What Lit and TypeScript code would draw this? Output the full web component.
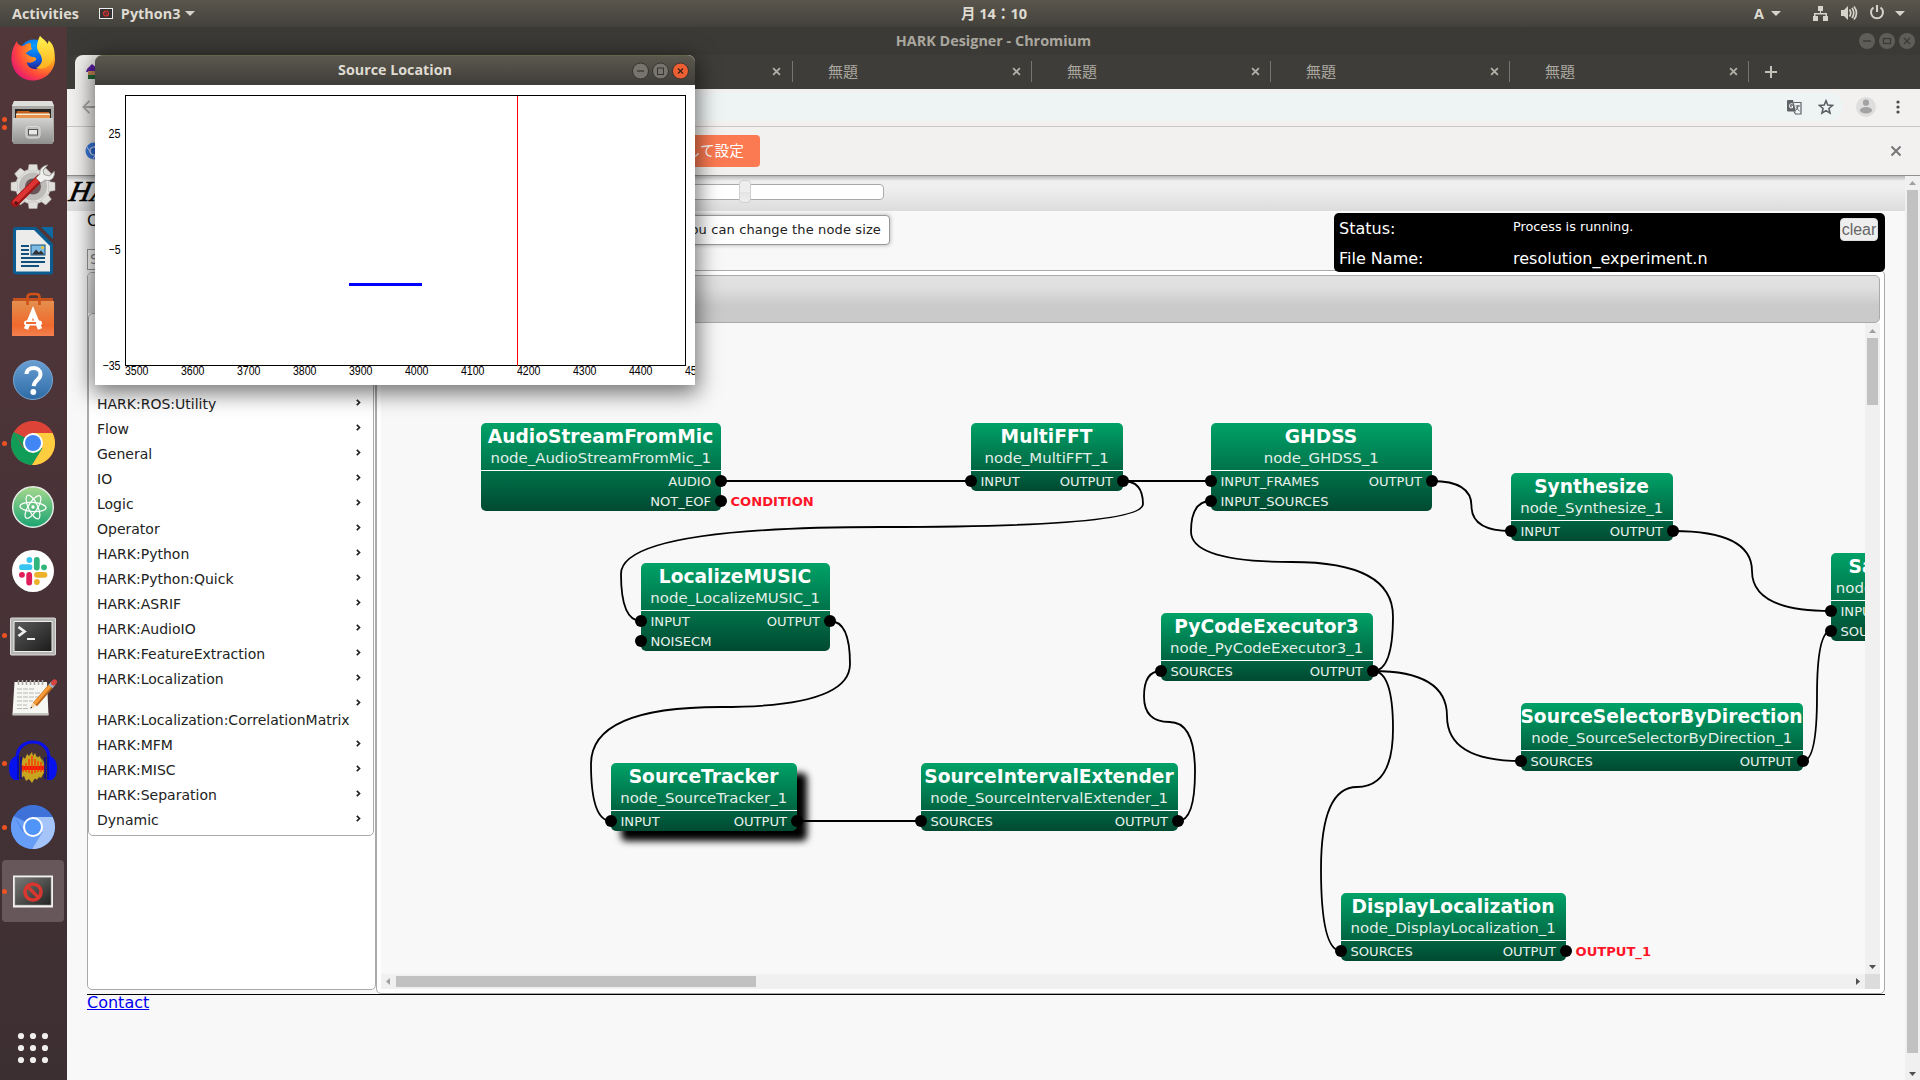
import { LitElement, html, svg, css, nothing } from "lit";
import { customElement } from "lit/decorators.js";

const TOP = "HARK";

const firefox = svg`
  <defs>
    <radialGradient id="ffA" cx=".85" cy=".2" r="1"><stop offset="0" stop-color="#ffe226"/><stop offset=".4" stop-color="#ff9a1f"/><stop offset=".7" stop-color="#ff4a3a"/><stop offset="1" stop-color="#e2127c"/></radialGradient>
    <radialGradient id="ffB" cx=".5" cy=".2" r=".8"><stop offset="0" stop-color="#0aa0ff"/><stop offset=".6" stop-color="#0a5be0"/><stop offset="1" stop-color="#2a1a80"/></radialGradient>
    <linearGradient id="ffC" x1="0" y1="0" x2="0" y2="1"><stop offset="0" stop-color="#fff44f"/><stop offset="1" stop-color="#ffb01f"/></linearGradient>
  </defs>
  <circle cx="25" cy="20" r="15.5" fill="url(#ffB)"/>
  <path d="M8 6 C4 12 2 18 2.500 26 C4 38 13 45.500 24 45.500 C36 45.500 46 36 46 24 C46 18 43 12 39 8 C42 20 36 27 34 27 C36 30 30 35 25 34 C19 33 18 29 18 27 C22 29 24 27 27 25 C28 23 26 22 24 22 C20 22 20 19 17 19 C17 17 20 16 23 14 C21 11 23 9 21 8 C17 8 16 11 13 11 C9 10 8 8 8 6Z" fill="url(#ffA)"/>
  <path d="M31 .8 C29 5 28 8 28 12 C28 17 33 19 33 25 C33 28 30 32 27 33 C34 36 44 31 45.500 20 C46 13 43 8 39.500 5.500 C39.500 7 39 8 38.500 9 C37 5 33 4 31 .8Z" fill="url(#ffC)"/>`;

const files = svg`
  <defs><linearGradient id="fiA" x1="0" y1="0" x2="0" y2="1"><stop offset="0" stop-color="#d2d2d0"/><stop offset="1" stop-color="#8f8f8d"/></linearGradient></defs>
  <path d="M5 2h38l2 5v36H3V7z" fill="#a9a9a7"/><path d="M5 2h38l2 5H3z" fill="#dededc"/>
  <rect x="6" y="10" width="36" height="11" fill="#2a2623"/>
  <path d="M8 12h12l1 1h19v8H7z" fill="#c4601c"/><rect x="7" y="14.500" width="34" height="1.500" fill="#f4ead8"/><rect x="7" y="16" width="34" height="4" fill="#e8924a"/>
  <rect x="4" y="19" width="40" height="26" rx="1" fill="url(#fiA)"/>
  <rect x="17" y="27.500" width="14" height="11.500" rx="2.500" fill="#bdbdbb" stroke="#dcdcda"/><rect x="19.500" y="30.500" width="9" height="5.500" fill="#e8e8e8" stroke="#555"/>`;

const settings = svg`
  <g transform="translate(0 -1)">
  <g fill="#e0dfdc" stroke="#b5b3b1" stroke-width=".5">
    <circle cx="24" cy="24.500" r="17.500"/>
    ${[0, 45, 90, 135, 180, 225, 270, 315].map((a) => svg`<path d="M19 9l1-6.500h8l1 6.500z" transform=${`rotate(${a} 24 24.500)`}></path>`)}
  </g>
  <circle cx="24" cy="24.500" r="14" fill="#bebcba"/><circle cx="24" cy="24.500" r="8" fill="#6a5657"/>
  <path d="M30 17 L6 41" stroke="#9c1717" stroke-width="8" stroke-linecap="round"/>
  <path d="M29 17 L6 40" stroke="#d33" stroke-width="4.600" stroke-linecap="round"/>
  <circle cx="7" cy="41" r="1.800" fill="#5a0f10"/>
  <path d="M27 16l5 5 4-3c6 2 10-2 9.500-9l-5 5-5.500-1.500-1-4.500 5-5c-6 .5-9 5-8 9z" fill="#f0f0ee" stroke="#8d8d8b" stroke-width=".8"/></g>`;

const writer = svg`
  <path d="M7 0h20l17 17v28q0 2.500-2.500 2.500H7q-3 0-3-3V3q0-3 3-3z" fill="#0b5c91"/>
  <path d="M8 3h17l16 16v25.500H7V4q0-1 1-1z" fill="#ececea"/><path d="M25 3l16 16H41z" fill="#cfe0ea"/>
  <path d="M32 0h12v12z" fill="#0f69a3"/>
  <g fill="#12527e"><path d="M12 18h8v2h-8zM12 22h8v2h-8zM12 26h8v2h-8zM12 30h24v2H12zM12 34h24v2H12zM12 38h18v2H12z"/></g>
  <rect x="22" y="18" width="14" height="10" fill="#7cbce4" stroke="#12527e"/><path d="M23 27.500l4-5 3 3 2-2 3.500 4z" fill="#333"/><circle cx="33.500" cy="20.500" r="1.600" fill="#e8c53a"/>`;

const software = svg`
  <defs><linearGradient id="soA" x1="0" y1="0" x2="0" y2="1"><stop offset="0" stop-color="#e48f4e"/><stop offset=".7" stop-color="#f0692c"/><stop offset="1" stop-color="#f38150"/></linearGradient></defs>
  <path d="M4 7h40v5H4z" fill="#c4521f"/><path d="M3 10h42v35H3z" fill="url(#soA)"/>
  <path d="M18.500 14V6q0-3 4-3h4q4 0 4 3v8" fill="none" stroke="#cf5117" stroke-width="2.600"/>
  <path d="M17 38L24 21l7 17" fill="none" stroke="#fff" stroke-width="4.500"/><rect x="15" y="29.500" width="18" height="5" rx="2.500" fill="#fff"/><path d="M17 32h10" stroke="#e95b1c" stroke-width="1.800"/>`;

const help = svg`
  <defs><linearGradient id="heA" x1="0" y1="0" x2="0" y2="1"><stop offset="0" stop-color="#6a9fd3"/><stop offset="1" stop-color="#2d6ba6"/></linearGradient></defs>
  <circle cx="24" cy="25" r="19.500" fill="url(#heA)" stroke="#78a5cf"/>
  <path d="M17.500 19c0-8 14-8 14 .2 0 5.600-6.500 6-6.800 12" fill="none" stroke="#fff" stroke-width="4"/><circle cx="24.300" cy="37" r="2.900" fill="#fff"/>`;

const chrome = (a: string, b: string, c: string, d: string) => svg`
  <circle cx="24" cy="24" r="22" fill="${a}"/>
  <path d="M24 24 L4.900 13 A22 22 0 0 0 23 46 L33.500 29.500z" fill="${b}"/>
  <path d="M24 14h19.600A22 22 0 0 1 23 46l10.500-17z" fill="${c}"/>
  <path d="M5 13a22 22 0 0 1 38.700 1H24l-10 15z" fill="${a}"/><path d="M4.900 13L15 29l6-8z" fill="${b}"/>
  <circle cx="24" cy="24" r="10" fill="#fff"/><circle cx="24" cy="24" r="8" fill="${d}"/>`;

const atom = svg`
  <defs><linearGradient id="atA" x1="0" y1="0" x2="0" y2="1"><stop offset="0" stop-color="#a5d88f"/><stop offset="1" stop-color="#1aa471"/></linearGradient></defs>
  <circle cx="24" cy="24" r="20.300" fill="url(#atA)" stroke="#e9ede9" stroke-width="1.400"/>
  <g fill="none" stroke="#fff" stroke-width="1.200"><ellipse cx="24" cy="24" rx="13" ry="4.600" transform="rotate(4 24 24)"/><ellipse cx="24" cy="24" rx="13" ry="4.600" transform="rotate(65 24 24)"/><ellipse cx="24" cy="24" rx="13" ry="4.600" transform="rotate(122 24 24)"/></g>
  <circle cx="24" cy="24" r="1.700" fill="#fff"/>`;

const slack = svg`
  <circle cx="24" cy="24" r="21" fill="#fff"/>
  <g stroke-width="5.800" stroke-linecap="round" fill="none">
    <path d="M13 20.200h7.500M20.400 13v-.1" stroke="#36c5f0"/><path d="M27.800 13v7.500M35 20.300h.1" stroke="#2eb67d"/>
    <path d="M28 27.800h7.500M27.900 35v.1" stroke="#ecb22e"/><path d="M20.200 28v7.500M13 27.800h-.1" stroke="#e01e5a"/>
  </g>`;

const terminal = svg`
  <defs><linearGradient id="teA" x1="0" y1="0" x2="1" y2="1"><stop offset="0" stop-color="#5a5a5a"/><stop offset="1" stop-color="#1c1c1c"/></linearGradient></defs>
  <rect x="1.500" y="7" width="45" height="37" rx="1" fill="#b5b5b3" stroke="#dcdcda"/><rect x="4.500" y="10" width="39" height="31" fill="#eee"/>
  <rect x="5.500" y="11" width="37" height="29" fill="url(#teA)"/>
  <path d="M9.500 16l6 4.500-6 4.500" fill="none" stroke="#eee" stroke-width="2.800"/><path d="M18 28h8" stroke="#eee" stroke-width="2"/>`;

const notepad = svg`
  <path d="M5.500 7h32.500l1.500 32.500H3.500z" fill="#f6f6f3"/><path d="M3.500 38h36v2.500h-36z" fill="#c5c5c0"/>
  <g stroke="#a5a5a0" fill="none" stroke-width="1.500"><path d="M9.500 5v5M13.500 5v5M17.500 5v5M21.500 5v5M25.500 5v5M29.500 5v5M33.500 5v5"/></g>
  <path d="M8 14h18M8 18h24M8 22h22M8 26h16M8 30h10M8 33.500h12" stroke="#b0b0ab" stroke-width=".9" stroke-dasharray="5 1"/>
  <path d="M26 29.500L42 11" stroke="#b5651a" stroke-width="5.400"/><path d="M25.400 29L41.500 10.500" stroke="#f79a36" stroke-width="3.400"/>
  <path d="M23 28l-1.500 5.500 5.500-2.500z" fill="#f2d4a5"/><path d="M21.400 33.600l.6-2 1.400 1.200z" fill="#222"/>
  <path d="M41.500 11.500l3-3.500" stroke="#9fb2c4" stroke-width="5.400"/><path d="M44.500 8l1-1.200" stroke="#d8443f" stroke-width="5" stroke-linecap="round"/>`;

const audacity = svg`
  <path d="M8 24V18C9 -2 39 -2 40 18v6" fill="none" stroke="#0b10e8" stroke-width="3.200"/>
  <ellipse cx="24" cy="28.500" rx="12.500" ry="11.500" fill="#a39021"/><path d="M12 27l2-9 2 2 2-5 2 2 3-4 1 4 2-3 2 5 3-2 2 7 2 3v6l-3 6-2-2-2 4-2-2-3 5-3-4-3 2-2-5-3 2z" fill="#c9a41f"/>
  <path d="M12 29h24" stroke="#f10f05" stroke-width="4"/><path d="M14 26v7M17 24v9M20 20v14M23 17v18M26 20v14M29 22v11M32 23v10M35 26v7" stroke="#f53a08" stroke-width="1.400"/>
  <path d="M10 16q-10 2-10 13 0 10 6 12h4zM38 16q10 2 10 13 0 10-6 12h-4z" fill="#0712ee"/><path d="M9 17v23M12 18v22M39 17v23M36 18v22" stroke="#06099b" stroke-width="1.400"/>`;

const denied = svg`
  <defs><linearGradient id="deA" x1="0" y1="0" x2="1" y2="1"><stop offset="0" stop-color="#7a7a78"/><stop offset="1" stop-color="#232323"/></linearGradient></defs>
  <rect x="4" y="8.500" width="40" height="32" fill="#f1f1ef"/><rect x="6" y="10.500" width="36" height="27.500" fill="url(#deA)" stroke="#888" stroke-width=".6"/>
  <circle cx="24" cy="25" r="8" fill="none" stroke="#d8372f" stroke-width="3.600"/><path d="M18.500 19.500l11 11" stroke="#d8372f" stroke-width="3.400"/>`;

interface DockItem { icon: unknown; dots?: number; active?: boolean }
const DOCK: DockItem[] = [
  { icon: firefox }, { icon: files, dots: 2 }, { icon: settings }, { icon: writer }, { icon: software },
  { icon: help }, { icon: chrome("#dd4437", "#0f9d58", "#ffcd40", "#4285f4"), dots: 1 }, { icon: atom }, { icon: slack },
  { icon: terminal, dots: 1 }, { icon: notepad }, { icon: audacity, dots: 1 },
  { icon: chrome("#3f72d8", "#669df6", "#a4c4fa", "#5094f8"), dots: 1 }, { icon: denied, dots: 1, active: true },
];

const MENU = [
  `${TOP}:ROS:Utility`, "Flow", "General", "IO", "Logic", "Operator", `${TOP}:Python`, `${TOP}:Python:Quick`,
  `${TOP}:ASRIF`, `${TOP}:AudioIO`, `${TOP}:FeatureExtraction`, `${TOP}:Localization`,
  `${TOP}:Localization:CorrelationMatrix`, `${TOP}:MFM`, `${TOP}:MISC`, `${TOP}:Separation`, "Dynamic",
];

interface GraphNode {
  name: string; x: number; y: number; w: number; inputs: string[]; outputs: string[];
  selected?: boolean; tag?: string; tagRow?: number; titleShift?: number;
}
const NODES: GraphNode[] = [
  { name: "AudioStreamFromMic", x: 481, y: 423, w: 240, inputs: [], outputs: ["AUDIO", "NOT_EOF"], tag: "CONDITION", tagRow: 1 },
  { name: "MultiFFT", x: 971, y: 423, w: 152, inputs: ["INPUT"], outputs: ["OUTPUT"] },
  { name: "GHDSS", x: 1211, y: 423, w: 221, inputs: ["INPUT_FRAMES", "INPUT_SOURCES"], outputs: ["OUTPUT"] },
  { name: "Synthesize", x: 1511, y: 473, w: 162, inputs: ["INPUT"], outputs: ["OUTPUT"] },
  { name: "LocalizeMUSIC", x: 641, y: 563, w: 189, inputs: ["INPUT", "NOISECM"], outputs: ["OUTPUT"] },
  { name: "PyCodeExecutor3", x: 1161, y: 613, w: 212, inputs: ["SOURCES"], outputs: ["OUTPUT"] },
  { name: "SourceSelectorByDirection", x: 1521, y: 703, w: 282, inputs: ["SOURCES"], outputs: ["OUTPUT"] },
  { name: "SourceTracker", x: 611, y: 763, w: 186, inputs: ["INPUT"], outputs: ["OUTPUT"], selected: true },
  { name: "SourceIntervalExtender", x: 921, y: 763, w: 257, inputs: ["SOURCES"], outputs: ["OUTPUT"] },
  { name: "DisplayLocalization", x: 1341, y: 893, w: 225, inputs: ["SOURCES"], outputs: ["OUTPUT"], tag: "OUTPUT_1", tagRow: 0 },
  { name: "SaveWavePCM", x: 1831, y: 553, w: 182, inputs: ["INPUT", "SOURCES"], outputs: ["OUTPUT"], titleShift: 4 },
];

/** Forward link: eases out to the middle column and back in. */
const forward = (x1: number, y1: number, x2: number, y2: number) => {
  const mx = (x1 + x2) / 2, my = (y1 + y2) / 2;
  return `M${x1} ${y1}Q${mx} ${y1} ${mx} ${my}Q${mx} ${y2} ${x2} ${y2}`;
};
/** Backward link: loops round both ports through the row between the nodes. */
const back = (x1: number, y1: number, x2: number, y2: number, row: number, out = 20) => {
  const r = x1 + out, l = x2 - out;
  return `M${x1} ${y1}Q${r} ${y1} ${r} ${(y1 + row) / 2}Q${r} ${row} ${(l + r) / 2} ${row}Q${l} ${row} ${l} ${(row + y2) / 2}Q${l} ${y2} ${x2} ${y2}`;
};
const LINKS = [
  "M721 481H971", "M1123 481H1211", "M797 821H921",
  back(1123, 481, 641, 621, 527), back(830, 621, 611, 821, 707), back(1178, 821, 1161, 671, 722, 17),
  back(1373, 671, 1211, 501, 562), back(1373, 671, 1341, 951, 787),
  forward(1432, 481, 1511, 531), forward(1673, 531, 1831, 611), forward(1373, 671, 1521, 761), forward(1803, 761, 1831, 631),
];

@customElement("node-canvas")
class NodeCanvas extends LitElement {
  static styles = css`
    :host { display: block; flex: 1; min-width: 0; overflow: hidden; background: #f8f8f8; }
    svg { display: block; font-family: "DejaVu Sans", sans-serif; }
    .title { font-size: 18.67px; font-weight: bold; fill: #fff; text-anchor: middle; }
    .sub { font-size: 14.95px; fill: #e3efe9; text-anchor: middle; }
    .port { font-size: 13.1px; fill: #e9f1ed; }
    .end { text-anchor: end; }
    .tag { font-size: 13.1px; font-weight: bold; fill: #ff1428; }
    .link { fill: none; stroke: #000; stroke-width: 1.8; }
  `;
  private node(n: GraphNode) {
    const h = 48 + 20 * Math.max(n.inputs.length, n.outputs.length);
    const r = n.x + n.w, c = n.x + n.w / 2;
    return svg`
      ${n.selected ? svg`<rect x=${n.x + 10} y=${n.y + 10} width=${n.w} height=${h} rx="5" filter="url(#glow)"></rect>` : nothing}
      <rect x=${n.x} y=${n.y} width=${n.w} height=${h} rx="5" fill="url(#box)"></rect>
      <rect x=${n.x} y=${n.y + 47} width=${n.w} height="1" fill="#fff"></rect>
      <text class="title" x=${c - 0.5 + (n.titleShift ?? 0)} y=${n.y + 19.5}>${n.name}</text>
      <text class="sub" x=${c - 0.3} y=${n.y + 40}>node_${n.name}_1</text>
      ${n.inputs.map((p, i) => svg`<circle cx=${n.x} cy=${n.y + 58 + i * 20} r="6"></circle><text class="port" x=${n.x + 9.5} y=${n.y + 63 + i * 20}>${p}</text>`)}
      ${n.outputs.map((p, i) => svg`<circle cx=${r} cy=${n.y + 58 + i * 20} r="6"></circle><text class="port end" x=${r - 10} y=${n.y + 63 + i * 20}>${p}</text>`)}
      ${n.tag ? svg`<text class="tag" x=${r + 9.5} y=${n.y + 63 + (n.tagRow ?? 0) * 20}>${n.tag}</text>` : nothing}`;
  }
  render() {
    return html`<svg width="1484" height="651" viewBox="381 323 1484 651">
      <defs>
        <linearGradient id="box" x1="0" y1="0" x2="0" y2="1"><stop offset="0" stop-color="#00a268"/><stop offset="1" stop-color="#004a31"/></linearGradient>
        <filter id="glow" x="-20%" y="-40%" width="140%" height="180%"><feGaussianBlur stdDeviation="3.500"/></filter>
      </defs>
      ${NODES.map((n) => this.node(n))}
      ${LINKS.map((d) => svg`<path class="link" d=${d}></path>`)}
    </svg>`;
  }
}

@customElement("source-window")
class SourceWindow extends LitElement {
  static styles = css`
    :host { display: flex; flex-direction: column; width: 600px; height: 330px; border-radius: 7px 7px 0 0; box-shadow: 0 5px 22px 3px rgba(0,0,0,.55); background: #fff; }
    .bar { height: 30px; box-sizing: border-box; display: grid; grid-template-columns: 1fr auto 1fr; align-items: center; padding: 0 6px 0 6px; border-radius: 7px 7px 0 0; background: linear-gradient(#5b584e, #3e3d38); border-top: 1px solid #66634f; }
    .title { font: 700 14.3px/28px "Open Sans", sans-serif; color: #dfdbd2; margin-top: -2px; }
    .buttons { display: flex; gap: 3px; justify-content: flex-end; }
    .plot { display: block; font: 12.5px "Liberation Sans", sans-serif; }
  `;
  render() {
    return html`
      <div class="bar"><span></span><span class="title">Source Location</span>
        <span class="buttons">
          <svg width="17" height="18"><circle cx="8.500" cy="9" r="8" fill="#76746c" stroke="#35342f"/><path d="M5 9h7" stroke="#35342f" stroke-width="1.200"/></svg>
          <svg width="17" height="18"><circle cx="8.500" cy="9" r="8" fill="#76746c" stroke="#35342f"/><rect x="5.500" y="6" width="6" height="6.500" fill="none" stroke="#35342f"/></svg>
          <svg width="17" height="18"><circle cx="8.500" cy="9" r="8" fill="#ed5f32" stroke="#35342f"/><path d="M6 6.500l5 5m0-5l-5 5" stroke="#35231c" stroke-width="1.200"/></svg>
        </span></div>
      <svg class="plot" width="600" height="300" viewBox="95 85 600 300">
        <rect x="125.500" y="95.500" width="560" height="270" fill="none" stroke="#000"/>
        <path d="M517.500 96v269.500" stroke="#f00" shape-rendering="crispEdges"/>
        <path d="M349 284.500h73" stroke="#00f" stroke-width="3" shape-rendering="crispEdges"/>
        <text x="108.500" y="138" textLength="12" lengthAdjust="spacingAndGlyphs">25</text>
        <text x="108.500" y="254" textLength="12" lengthAdjust="spacingAndGlyphs">−5</text>
        <text x="102.500" y="370" textLength="18" lengthAdjust="spacingAndGlyphs">−35</text>
        ${[3500, 3600, 3700, 3800, 3900, 4000, 4100, 4200, 4300, 4400, 4500].map((v, i) => svg`<text x=${125 + i * 56} y="375" textLength="23.500" lengthAdjust="spacingAndGlyphs">${v}</text>`)}
      </svg>`;
  }
}

@customElement("app-root")
class AppRoot extends LitElement {
  static styles = css`
    * { box-sizing: border-box; }
    :host { display: flex; flex-direction: column; position: relative; width: 1920px; height: 1080px; overflow: hidden; background: #f8f8f8; font-family: "DejaVu Sans", sans-serif; }
    svg { display: block; flex: none; }
    .top { height: 27px; flex: none; display: grid; grid-template-columns: 1fr auto 1fr; align-items: center; background: linear-gradient(#5a564d, #42413b); color: #dfdbd2; font: 700 14.4px/26px "Open Sans", "Noto Sans CJK JP", sans-serif; }
    .top-left { display: flex; align-items: center; padding: 0 0 1px 12px; }
    .app { margin-left: 8px; }
    .thumb { margin-left: 20px; }
    .down { margin-left: 5px; }
    .clock { padding: 0 0 0 68px; width: 136px; white-space: nowrap; font-size: 14.5px; display: flex; justify-content: center; }
    .top-right { display: flex; justify-content: flex-end; align-items: center; padding: 0 14px 1px 0; }
    .body { flex: 1; display: flex; min-height: 0; }
    .dock { width: 67px; flex: none; display: flex; flex-direction: column; background: linear-gradient(#523739, #4a3338 45%, #3c2f32); position: relative; z-index: 6; }
    .slot { height: 64px; flex: none; display: flex; align-items: center; margin: 0 3px 0 2px; border-radius: 4px; }
    .slot.active { background: #67565a; height: 62px; margin-top: 1px; }
    .dots { width: 5px; display: flex; flex-direction: column; gap: 3px; }
    .dot { width: 5px; height: 5px; border-radius: 50%; background: #ee5222; }
    .icon { margin-left: 2px; }
    .apps { margin: auto auto 16px 17px; }
    .browser { flex: 1; min-width: 0; display: flex; flex-direction: column; }
    .titlebar { height: 28px; flex: none; display: grid; grid-template-columns: 1fr auto 1fr; align-items: center; background: #3b3a36; color: #aaa79f; font: 700 14.4px/28px "Open Sans", sans-serif; padding-right: 5px; }
    .heading { padding-left: 5px; }
    .wins { display: flex; gap: 4px; justify-content: flex-end; }
    .tabs { height: 34px; flex: none; display: flex; align-items: center; background: #3e3d39; color: #aaa79f; font: 15px/32px "Noto Sans CJK JP", sans-serif; padding: 0 0 1px 8px; }
    .tab-active { width: 478px; height: 34px; margin-bottom: -1px; background: #f2f1ef; border-radius: 8px 8px 0 0; padding: 9px 0 0 10px; }
    .first-close { width: 228px; margin-right: 11px; display: flex; justify-content: flex-end; }
    .tab { width: 239px; height: 21px; display: flex; align-items: center; justify-content: space-between; border-left: 1px solid #77756f; padding: 0 10px 0 35px; }
    .label { margin-top: -2px; }
    .plus { height: 21px; border-left: 1px solid #77756f; padding: 5px 0 0 16px; }
    .toolbar { height: 38px; flex: none; display: flex; align-items: center; padding: 0 20px 1px 15px; background: #f2f1ef; border-bottom: 1px solid #c9c8c6; }
    .omni { flex: 1; height: 28px; margin: 0 13px 0 60px; border-radius: 14px; background: #eef3f4; display: flex; align-items: center; justify-content: flex-end; gap: 16px; padding-right: 9px; }
    .more { margin-left: 20px; }
    .info { height: 49px; flex: none; display: flex; align-items: center; background: #f2f1ef; border-bottom: 1px solid #8f8f8b; padding: 0 18px; color: #fff; font: 14.7px/30px "Noto Sans CJK JP", sans-serif; }
    .setbtn { width: 140px; margin-left: 517px; margin-right: auto; height: 32px; border-radius: 4px; background: #fc7a52; padding-right: 16px; text-align: right; }
    .viewport { flex: 1; display: flex; min-height: 0; }
    .page { flex: 1; min-width: 0; display: flex; flex-direction: column; }
    .banner { height: 35px; flex: none; background: linear-gradient(#b8b8b8, #eee 5px, #f0f0f0 10px, #dcdcdc); display: flex; align-items: center; justify-content: space-between; }
    .logo { font: italic 400 29px/30px "Liberation Serif", serif; color: #000; width: 60px; height: 32px; margin-bottom: 3px; transform: skewX(-12deg); letter-spacing: 1px; padding-left: 3px; -webkit-text-stroke: .6px #000; }
    .slider { width: 300px; height: 16px; border: 1px solid #aaa; border-radius: 4px; background: #fff; margin: 0 1021px 4px 0; display: flex; align-items: center; }
    .knob { width: 12px; height: 23px; margin-left: 154px; flex: none; border: 1px solid #d0d0d0; border-radius: 4px; background: linear-gradient(#eee 50%, #e4e4e4 52%, #eee); }
    .content { padding: 0 20px 0 20px; display: flex; flex-direction: column; }
    .head { height: 59px; display: flex; justify-content: space-between; }
    .cat { font-size: 16px; line-height: 19px; color: #111; }
    .head-left { display: flex; flex-direction: column; justify-content: space-between; }
    .search { width: 180px; height: 21px; border: 1px solid #999; background: #fff; color: #888; font-size: 14px; line-height: 19px; padding-left: 2px; }
    .status { width: 551px; height: 59px; margin-top: 2px; background: #000; border-radius: 5px; color: #fff; font-size: 16px; display: grid; grid-template-columns: 174px 1fr auto; grid-template-rows: 30px 29px; padding: 0 7px 0 5px; align-items: center; z-index: 1; }
    .run { font-size: 12.8px; padding-bottom: 3px; }
    .file { padding-top: 2px; }
    .clear { height: 23px; width: 38px; border-radius: 4px; border: 1px solid #ddd; background: #eee; color: #666; font: 16px/22px "Liberation Sans", sans-serif; text-align: center; margin-top: 3px; }
    .panels { height: 724px; display: flex; }
    .left { width: 289px; height: 718px; margin-top: 2px; flex: none; border: 1px solid #aaa; border-radius: 5px; background: #fff; display: flex; flex-direction: column; }
    .left-head { height: 40px; flex: none; background: linear-gradient(#ededed, #dcdcdc); border-radius: 4px 4px 0 0; }
    .menu { border: 1px solid #aaa; border-radius: 5px; height: 523px; padding: 77px 8px 0 8px; font-size: 14px; color: #222; margin-right: 1px; }
    .item { height: 25px; display: flex; align-items: center; justify-content: space-between; padding-right: 4px; }
    .item.long { height: 41px; display: grid; grid-template-columns: 1fr; grid-template-rows: 20px 17px; align-content: start; white-space: nowrap; }
    .item.long .arrow { justify-self: end; align-self: end; margin: 0 0 5px; }
    .arrow { margin-bottom: 3px; }
    .right { flex: 1; min-width: 0; border: 1px solid #aaa; border-radius: 5px; background: #fff; padding: 4px; display: flex; flex-direction: column; }
    .tools { height: 48px; flex: none; border: 1px solid #aaa; border-radius: 5px; background: linear-gradient(#e2e2e2, #dfdfdf 25%, #cacaca 65%, #cacaca); }
    .stage { height: 651px; display: flex; }
    .vbar { width: 15px; flex: none; background: #f0f0f0; display: flex; flex-direction: column; align-items: center; padding: 6px 0 5px; }
    .vthumb { width: 11px; background: #c1c1c1; margin: 5px 0 auto; height: 67px; }
    .hbar { height: 15px; flex: none; background: #f0f0f0; display: flex; align-items: center; padding-left: 5px; }
    .hthumb { width: 360px; height: 11px; margin-left: 6px; margin-right: auto; background: #c1c1c1; }
    .corner { width: 15px; height: 15px; background: #dcdcdc; margin-left: 5px; }
    .foot { border-top: 1px solid #000; font-size: 16px; line-height: 15px; }
    .foot a { color: #00e; text-decoration: underline; }
    .pagebar { padding: 5px 0 4px; }
    .pagebar .vthumb { height: 863px; }
    .tip { position: absolute; left: 680px; top: 215px; width: 210px; height: 30px; border: 1px solid #999; border-radius: 4px; background: #fff; box-shadow: 0 0 4px #aaa; color: #222; font-size: 13px; letter-spacing: .13px; line-height: 27px; display: flex; justify-content: flex-end; padding-right: 8px; white-space: nowrap; }
    source-window { position: absolute; left: 95px; top: 55px; z-index: 5; }
  `;

  private cross(size: number, color: string, w = 1.8) {
    return html`<svg width=${size} height=${size} viewBox="0 0 8 8"><path d="M1 1l6 6m0-6l-6 6" stroke=${color} stroke-width=${w * 8 / size}></path></svg>`;
  }
  private tri(dir: "up" | "down" | "left" | "right", color: string) {
    const d = { up: "M0 4l3.500-4L7 4z", down: "M0 0h7L3.500 4z", left: "M4 0v7L0 3.500z", right: "M0 0v7l4-3.500z" }[dir];
    const v = dir === "up" || dir === "down";
    return html`<svg width=${v ? 7 : 4} height=${v ? 4 : 7}><path d=${d} fill=${color}></path></svg>`;
  }
  private win(glyph: unknown) {
    return html`<svg width="16" height="16"><circle cx="8" cy="8" r="8" fill="#5e5d57"/>${glyph}</svg>`;
  }

  render() {
    return html`
      <header class="top">
        <div class="top-left"><span>Activities</span>
          <svg class="thumb" width="14" height="11"><rect x=".5" y=".5" width="13" height="10" fill="#333" stroke="#eee"/><circle cx="7" cy="5.500" r="2.500" fill="none" stroke="#e03030" stroke-width="1.200"/><path d="M5.300 3.800l3.400 3.400" stroke="#e03030"/></svg>
          <span class="app">Python3</span>
          <svg class="down" width="10" height="5"><path d="M0 0h10L5 5z" fill="#d6d3ca"/></svg></div>
        <div class="clock">月 14：10</div>
        <div class="top-right"><span>A</span>
          <svg width="142" height="27" viewBox="1764 0 142 27" fill="#d6d3ca">
            <path d="M1771 11h10l-5 5zM1895 11h10l-5 5z"/>
            <path d="M1818 6h5v5h-2v2h6v3h1v5h-5v-5h2.500v-1.500h-10V16h2.500v5h-5v-5h1v-3h6v-2h-2z"/>
            <path d="M1841 10h3l4-4v14l-4-4h-3z"/>
            <g fill="none" stroke="#d6d3ca" stroke-width="1.700"><path d="M1849.500 9.500q2.500 3.500 0 7M1852 8q3.500 5 0 10M1854 6.500q5 6.500 0 13"/></g>
            <g fill="none" stroke="#d6d3ca" stroke-width="2"><path d="M1873.500 7.500a6 6 0 1 0 7 0M1877 5v7"/></g>
          </svg></div>
      </header>
      <div class="body">
        <nav class="dock">
          ${DOCK.map((d) => html`<div class="slot ${d.active ? "active" : ""}"><span class="dots">${Array.from({ length: d.dots ?? 0 }, () => html`<i class="dot"></i>`)}</span>
            <svg class="icon" width="48" height="48" viewBox="0 0 48 48">${d.icon}</svg></div>`)}
          <svg class="apps" width="32" height="32" fill="#f0eeee">${[4, 16, 28].map((y) => [4, 16, 28].map((x) => svg`<circle cx=${x} cy=${y} r="3.100"></circle>`))}</svg>
        </nav>
        <main class="browser">
          <div class="titlebar"><span></span><span class="heading">HARK Designer - Chromium</span>
            <span class="wins">${this.win(svg`<path d="M4 8h8" stroke="#3b3a36" stroke-width="1.400"/>`)}${this.win(svg`<rect x="4.500" y="5.500" width="7" height="5" fill="none" stroke="#3b3a36" stroke-width="1.300"/>`)}${this.win(svg`<path d="M5 5l6 6m0-6l-6 6" stroke="#3b3a36" stroke-width="1.300"/>`)}</span></div>
          <div class="tabs">
            <div class="tab-active"><svg width="16" height="16"><path d="M2 5l5-5 6 5 1 3H1z" fill="#5b1fa8"/><rect x="3" y="7" width="9" height="5" fill="#c98a5a"/><rect x="3" y="11" width="10" height="4" fill="#226b3a"/></svg></div>
            <div class="first-close">${this.cross(9, "#b3b0a8")}</div>
            ${[1, 2, 3, 4].map(() => html`<div class="tab"><span class="label">無題</span>${this.cross(9, "#b3b0a8")}</div>`)}
            <div class="plus"><svg width="12" height="12"><path d="M6 0v12M0 6h12" stroke="#c4c1b9" stroke-width="2"/></svg></div>
          </div>
          <div class="toolbar">
            <svg width="14" height="14"><path d="M14 7H1.500M7.500 .8L1.300 7l6.200 6.200" fill="none" stroke="#a9a8a6" stroke-width="1.800"/></svg>
            <div class="omni">
              <svg width="15" height="15"><path d="M1 0h5l3 11.500H1q-1 0-1-1V1q0-1 1-1z" fill="#5f6368"/><path d="M7 2.500h7v11.500H8.500L7 11.500" fill="none" stroke="#5f6368" stroke-width="1.200"/><path d="M8.500 6h4.500M11 5v1q-.5 3-2 4M9.500 7q1 3 3 4" stroke="#5f6368" fill="none"/><path d="M5.800 4q-3-1.200-3.300 1.800T5.500 7.800V6H4.300" stroke="#fff" fill="none"/></svg>
              <svg width="16" height="16" viewBox="0 0 16 16"><path d="M8 1.800l1.800 4.300 4.600.4-3.500 3 1.100 4.600L8 11.600l-4 2.500 1.100-4.600-3.500-3 4.600-.4z" fill="none" stroke="#5a5d61" stroke-width="1.600"/></svg>
            </div>
            <svg width="20" height="20"><circle cx="10" cy="10" r="10" fill="#dedede"/><circle cx="10" cy="5.700" r="3.100" fill="#a3a3a3"/><ellipse cx="10" cy="13.300" rx="6" ry="3.200" fill="#a3a3a3"/></svg>
            <svg class="more" width="4" height="14" fill="#4a4a4a"><circle cx="2" cy="2" r="1.600"/><circle cx="2" cy="7" r="1.600"/><circle cx="2" cy="12" r="1.600"/></svg>
          </div>
          <div class="info">
            <svg width="18" height="18"><circle cx="9" cy="9" r="8.500" fill="#3b7ae0"/><circle cx="9" cy="9" r="4" fill="#2f6bd0" stroke="#cfe0fb" stroke-width="1.200"/><path d="M2 5l4 6M9 5h8M11 12l-3 5" stroke="#cfe0fb"/></svg>
            <span class="setbtn">既定として設定</span>${this.cross(12, "#77767a", 2)}
          </div>
          <div class="viewport">
            <div class="page">
              <div class="banner"><span class="logo">HARK</span><span class="slider"><i class="knob"></i></span></div>
              <div class="content">
                <div class="head">
                  <div class="head-left"><span class="cat">Category</span><span class="search">Search</span></div>
                  <div class="status"><span>Status:</span><span class="run">Process is running.</span><span class="clear">clear</span><span class="file">File Name:</span><span class="file">resolution_experiment.n</span></div>
                </div>
                <div class="panels">
                  <aside class="left"><div class="left-head"></div>
                    <div class="menu">${MENU.map((m) => {
                      const long = m.length > 26;
                      const arrow = html`<svg class="arrow" width="5" height="7"><path d="M.8 .8l2.700 2.700L.8 6.200" fill="none" stroke="#222" stroke-width="1.700"/></svg>`;
                      return long ? html`<div class="item long">${arrow}<span>${m}</span></div>` : html`<div class="item"><span>${m}</span>${arrow}</div>`;
                    })}</div></aside>
                  <section class="right"><div class="tools"></div>
                    <div class="stage"><node-canvas></node-canvas>
                      <div class="vbar">${this.tri("up", "#a0a0a0")}<i class="vthumb"></i>${this.tri("down", "#505050")}</div></div>
                    <div class="hbar">${this.tri("left", "#a0a0a0")}<i class="hthumb"></i>${this.tri("right", "#505050")}<i class="corner"></i></div>
                  </section>
                </div>
                <footer class="foot"><a>Contact</a></footer>
              </div>
            </div>
            <div class="vbar pagebar">${this.tri("up", "#a0a0a0")}<i class="vthumb"></i>${this.tri("down", "#505050")}</div>
          </div>
        </main>
      </div>
      <div class="tip">You can change the node size</div>
      <source-window></source-window>`;
  }
}
